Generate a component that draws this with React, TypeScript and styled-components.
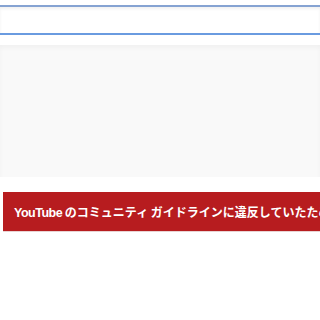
import React from 'react';
import styled, { createGlobalStyle } from 'styled-components';

const GlobalStyle = createGlobalStyle`
  html, body {
    margin: 0;
    padding: 0;
    background: #ffffff;
  }
  body {
    font-family: "Noto Sans CJK JP", "Noto Sans", sans-serif;
    overflow: hidden;
  }
`;

const Page = styled.div`
  width: 320px;
  height: 320px;
  display: flex;
  flex-direction: column;
  overflow: hidden;
`;

const TopEdge = styled.div`
  height: 5px;
  flex-shrink: 0;
`;

const Frame = styled.div`
  height: 26px;
  flex-shrink: 0;
  border-top: 2px solid #86a3d2;
  border-bottom: 2px solid #6a9be0;
  background: #ffffff;
  box-shadow: inset 0 2px 3px rgba(0, 0, 0, 0.06);
`;

const Gap = styled.div<{ $h: number }>`
  height: ${({ $h }) => $h}px;
  flex-shrink: 0;
`;

const Placeholder = styled.div`
  height: 132px;
  flex-shrink: 0;
  background: #f9f9f9;
  box-shadow: inset 0 3px 4px rgba(0, 0, 0, 0.035);
`;

const Banner = styled.div`
  margin-left: 3px;
  height: 39px;
  flex-shrink: 0;
  background: #b71c1f;
  border-bottom: 1px solid #e8d3d3;
  display: flex;
  align-items: center;
  padding-left: 11px;
  white-space: nowrap;
  overflow: hidden;
`;

const Message = styled.span`
  color: #ffffff;
  font-size: 12px;
  font-weight: 700;
  letter-spacing: 0;
`;

const Brand = styled.span`
  font-family: "Liberation Sans", Arial, sans-serif;
  font-size: 12.5px;
  font-weight: 700;
  letter-spacing: -0.5px;
`;

export default function App() {
  return (
    <>
      <GlobalStyle />
      <Page>
        <TopEdge />
        <Frame />
        <Gap $h={10} />
        <Placeholder />
        <Gap $h={15} />
        <Banner>
          <Message>
            <Brand>YouTube</Brand> のコミュニティ ガイドラインに違反していたため
          </Message>
        </Banner>
      </Page>
    </>
  );
}
